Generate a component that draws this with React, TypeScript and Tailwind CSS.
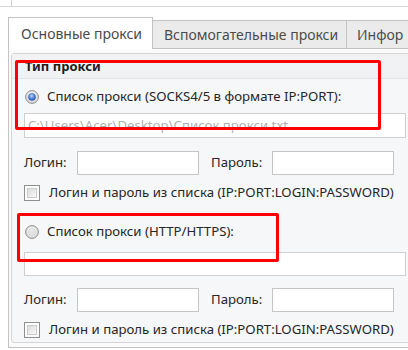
import React from 'react';

const font = { fontFamily: '"Noto Sans", "Open Sans", sans-serif' };

function Radio({ checked }: { checked?: boolean }) {
  return (
    <svg width="14" height="14" viewBox="0 0 14 14" className="shrink-0">
      <defs>
        <radialGradient id="rg-off" cx="50%" cy="40%" r="60%">
          <stop offset="0%" stopColor="#ffffff" />
          <stop offset="100%" stopColor="#d4d4d4" />
        </radialGradient>
        <radialGradient id="rg-dot" cx="45%" cy="35%" r="65%">
          <stop offset="0%" stopColor="#c6d9f7" />
          <stop offset="60%" stopColor="#4f7ed4" />
          <stop offset="100%" stopColor="#2a55a8" />
        </radialGradient>
      </defs>
      <circle cx="7" cy="7" r="6.4" fill="url(#rg-off)" stroke="#8d8d8d" strokeWidth="1" />
      {checked ? (
        <circle cx="7" cy="7" r="3.6" fill="url(#rg-dot)" stroke="#3f6bbf" strokeWidth="0.6" />
      ) : (
        <circle cx="7" cy="7" r="4" fill="#d9d9d9" opacity="0.6" />
      )}
    </svg>
  );
}

function Checkbox() {
  return (
    <div className="w-[16px] h-[16px] shrink-0 border border-[#8e8f8f] bg-white p-[2px]">
      <div className="w-full h-full border border-[#c9cacb] bg-gradient-to-br from-[#dcdcdc] to-[#fafafa]" />
    </div>
  );
}

function LoginRow({ className }: { className: string }) {
  return (
    <div className={`flex items-center ${className}`}>
      <span className="w-[53px]">Логин:</span>
      <div className="w-[122px] h-[24px] border border-[#c5c5c5] bg-white" />
      <span className="ml-[12px] w-[61px]">Пароль:</span>
      <div className="w-[122px] h-[24px] border border-[#c5c5c5] bg-white" />
    </div>
  );
}

function ListCheck({ className }: { className: string }) {
  return (
    <div className={`flex items-center gap-[9px] ${className}`}>
      <Checkbox />
      <span>Логин и пароль из списка (IP:PORT:LOGIN:PASSWORD)</span>
    </div>
  );
}

export default function App() {
  return (
    <div className="relative w-[408px] h-[350px] overflow-hidden bg-white text-[#262626]" style={font}>
      {/* strip of the window above */}
      <div className="h-[7px] border-b border-[#d8d8d8]">
        <div className="ml-[11px] w-px h-full bg-[#d0d0d0]" />
      </div>

      {/* tabs */}
      <div className="mt-[10px] pl-[8px] flex items-end h-[31px] text-[14px] text-[#4b4b4b] whitespace-nowrap">
        <div className="relative z-10 -mb-px w-[145px] shrink-0 h-[32px] border border-b-0 border-[#c3c3c3] bg-white pl-[12px] flex items-center">
          Основные прокси
        </div>
        <div className="w-[194px] shrink-0 h-[28px] border-t border-r border-[#c3c3c3] bg-[#ebebeb] pl-[11px] flex items-center">
          Вспомогательные прокси
        </div>
        <div className="w-[61px] shrink-0 overflow-hidden h-[28px] border-t border-[#c3c3c3] bg-[#ebebeb] pl-[10px] flex items-center">
          Инфор
        </div>
      </div>

      {/* tab panel */}
      <div className="ml-[8px] w-[420px] h-[300px] border-t border-l border-b border-[#c3c3c3] bg-[#fbfbfb] pt-[4px] pl-[2px] text-[13.2px]">
        <div className="w-[420px] h-[290px] rounded-[3px] border border-[#d5d5d5] bg-[#f6f7f8]">
          <div className="h-[25px] border-b border-[#e2e3e5] bg-[#f1f2f4] pl-[13px] pt-[6px] font-bold text-[13px] leading-[13px] text-[#1c1c1c]">
            Тип прокси
          </div>

          <div className="pl-[12px]">
            <div className="mt-[10px] h-[16px] flex items-center gap-[8px] pl-px">
              <Radio checked />
              <span>Список прокси (SOCKS4/5 в формате IP:PORT):</span>
            </div>
            <div className="mt-[8px] w-[382px] h-[25px] border border-[#cfcfcf] bg-white pl-[3px] flex items-center text-[#b0b0b0]">
              C:\Users\Acer\Desktop\Список прокси.txt
            </div>
            <LoginRow className="mt-[13px]" />
            <ListCheck className="mt-[8px]" />

            <div className="mt-[21px] h-[16px] flex items-center gap-[8px] pl-px">
              <Radio />
              <span>Список прокси (HTTP/HTTPS):</span>
            </div>
            <div className="mt-[12px] w-[382px] h-[24px] border border-[#cfcfcf] bg-white" />
            <LoginRow className="mt-[12px]" />
            <ListCheck className="mt-[8px]" />
          </div>
        </div>
      </div>

      {/* red annotation frames */}
      <div className="absolute left-[15px] top-[60px] w-[366px] h-[70px] border-[3px] border-[#ff0000] rounded-[2px] pointer-events-none" />
      <div className="absolute left-[17px] top-[213px] w-[262px] h-[49px] border-[3px] border-[#ff0000] rounded-[2px] pointer-events-none" />
    </div>
  );
}
